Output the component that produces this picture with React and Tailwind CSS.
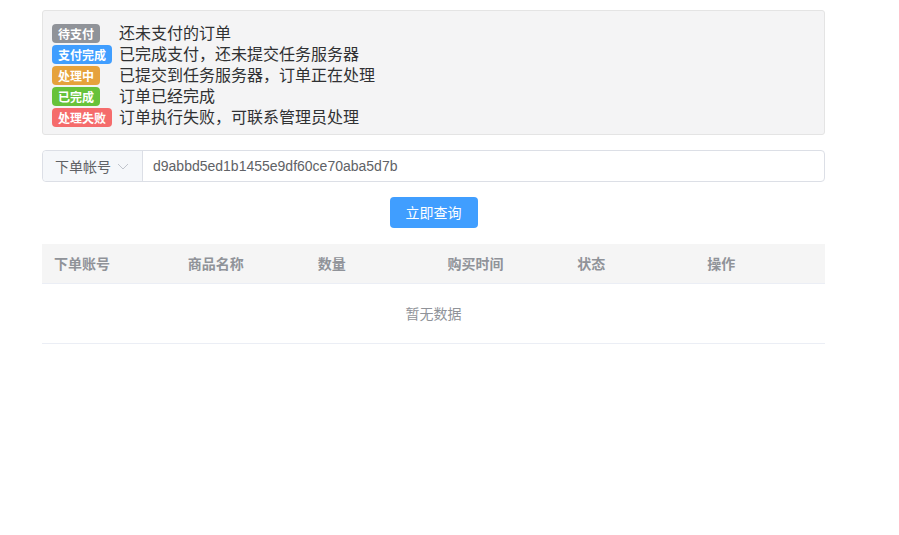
export default function App() {
  const font = { fontFamily: '"Microsoft YaHei", "Noto Sans CJK SC", "Liberation Sans", sans-serif' };
  const rows = [
    { tag: "待支付", cls: "bg-[#909399]", text: "还未支付的订单" },
    { tag: "支付完成", cls: "bg-[#409eff]", text: "已完成支付，还未提交任务服务器" },
    { tag: "处理中", cls: "bg-[#e6a23c]", text: "已提交到任务服务器，订单正在处理" },
    { tag: "已完成", cls: "bg-[#67c23a]", text: "订单已经完成" },
    { tag: "处理失败", cls: "bg-[#f56c6c]", text: "订单执行失败，可联系管理员处理" },
  ];
  const cols = ["下单账号", "商品名称", "数量", "购买时间", "状态", "操作"];
  return (
    <div className="w-[899px] h-[535px] bg-white pl-[42px] pt-[10px]" style={font}>
      <div className="w-[783px]">
        <div className="h-[125px] rounded-[3px] border border-[#e4e4e4] bg-[#f4f4f5] pl-[9px] pt-[10px]">
          {rows.map((r) => (
            <div key={r.tag} className="flex h-[21px] items-center">
              <div className="w-[67px] shrink-0">
                <span className={`inline-flex h-[19px] items-center rounded-[4px] px-[6px] text-[12px] font-bold leading-none text-white ${r.cls}`}>
                  {r.tag}
                </span>
              </div>
              <span className="text-[16px] leading-[20px] text-[#303133]">{r.text}</span>
            </div>
          ))}
        </div>
        <div className="mt-[15px] flex h-[32px] rounded-[4px] border border-[#dcdfe6]">
          <div className="flex w-[100px] shrink-0 items-center border-r border-[#dcdfe6] bg-[#f5f7fa] pl-[12px] text-[14px] text-[#606266] rounded-l-[4px]">
            <span>下单帐号</span>
            <svg className="ml-[5px]" width="14" height="14" viewBox="0 0 14 14" fill="none">
              <path d="M2 5 L7 10 L12 5" stroke="#c0c4cc" strokeWidth="1" />
            </svg>
          </div>
          <div className="flex flex-1 items-center pl-[10px] text-[14px] text-[#606266]" style={{ fontFamily: '"Liberation Sans", Arial, sans-serif' }}>
            d9abbd5ed1b1455e9df60ce70aba5d7b
          </div>
        </div>
        <div className="mt-[15px] flex justify-center">
          <button className="h-[31px] w-[88px] rounded-[4px] bg-[#409eff] text-[14px] text-white">立即查询</button>
        </div>
        <div className="mt-[16px]">
          <div className="flex h-[40px] items-center border-b border-[#ebeef5] bg-[#f5f5f5] text-[14px] font-bold text-[#909399]">
            {cols.map((c, i) => (
              <div key={c} className={i === 0 ? "w-[134px] pl-[12px]" : "w-[130px] pl-[12px]"}>{c}</div>
            ))}
          </div>
          <div className="flex h-[60px] items-center justify-center border-b border-[#ebeef5] text-[14px] text-[#909399]">
            暂无数据
          </div>
        </div>
      </div>
    </div>
  );
}
